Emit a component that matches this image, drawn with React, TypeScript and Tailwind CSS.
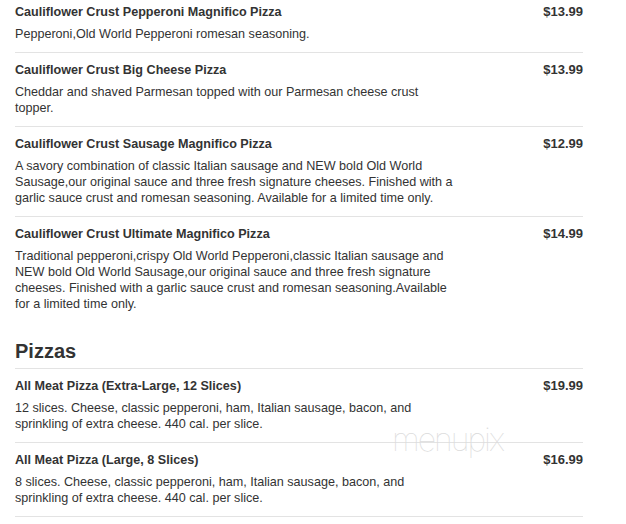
import React from "react";

type Item = { name: string; desc: string; price: string };

const cauliflower: Item[] = [
  {
    name: "Cauliflower Crust Pepperoni Magnifico Pizza",
    desc: "Pepperoni,Old World Pepperoni romesan seasoning.",
    price: "$13.99",
  },
  {
    name: "Cauliflower Crust Big Cheese Pizza",
    desc: "Cheddar and shaved Parmesan topped with our Parmesan cheese crust topper.",
    price: "$13.99",
  },
  {
    name: "Cauliflower Crust Sausage Magnifico Pizza",
    desc: "A savory combination of classic Italian sausage and NEW bold Old World Sausage,our original sauce and three fresh signature cheeses. Finished with a garlic sauce crust and romesan seasoning. Available for a limited time only.",
    price: "$12.99",
  },
  {
    name: "Cauliflower Crust Ultimate Magnifico Pizza",
    desc: "Traditional pepperoni,crispy Old World Pepperoni,classic Italian sausage and NEW bold Old World Sausage,our original sauce and three fresh signature cheeses. Finished with a garlic sauce crust and romesan seasoning.Available for a limited time only.",
    price: "$14.99",
  },
];

const pizzas: Item[] = [
  {
    name: "All Meat Pizza (Extra-Large, 12 Slices)",
    desc: "12 slices. Cheese, classic pepperoni, ham, Italian sausage, bacon, and sprinkling of extra cheese. 440 cal. per slice.",
    price: "$19.99",
  },
  {
    name: "All Meat Pizza (Large, 8 Slices)",
    desc: "8 slices. Cheese, classic pepperoni, ham, Italian sausage, bacon, and sprinkling of extra cheese. 440 cal. per slice.",
    price: "$16.99",
  },
];

function MenuRow({ item, first }: { item: Item; first?: boolean }) {
  return (
    <div
      className={
        first
          ? "flex justify-between pt-[3px] pb-[10px]"
          : "flex justify-between border-t border-[#e3e3e3] pt-[8px] pb-[10px]"
      }
    >
      <div className="w-[443px]">
        <div className="text-[12.6px] font-bold leading-[18px] text-[#333]">{item.name}</div>
        <p className="mt-[5px] text-[12.6px] leading-[16px] text-[#333]">{item.desc}</p>
      </div>
      <div className="text-[13px] font-bold leading-[18px] text-[#333]">{item.price}</div>
    </div>
  );
}

export default function App() {
  return (
    <div
      className="relative h-[524px] w-[626px] overflow-hidden bg-white"
      style={{ fontFamily: '"Liberation Sans", Arial, sans-serif' }}
    >
      <div className="w-[583px] pl-[15px]">
        {cauliflower.map((item, i) => (
          <MenuRow key={item.name} item={item} first={i === 0} />
        ))}
        <h2 className="mt-[17px] pb-[5px] text-[20px] font-bold leading-[24px] text-[#333]">
          Pizzas
        </h2>
        {pizzas.map((item) => (
          <MenuRow key={item.name} item={item} />
        ))}
        <div className="border-t border-[#e3e3e3]" />
      </div>
      <div className="pointer-events-none absolute left-[392px] top-[416px] font-['Inter',sans-serif] text-[32px] font-thin tracking-[-2px] text-[#dcdcdc]">
        menupix
      </div>
    </div>
  );
}
